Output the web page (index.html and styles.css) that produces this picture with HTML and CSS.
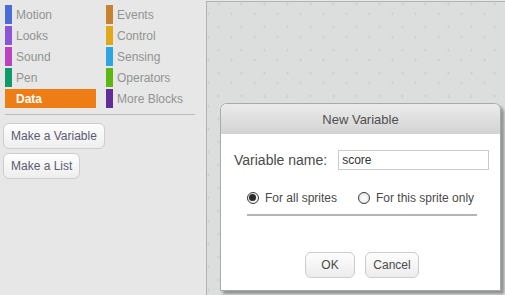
FILE: index.html
```html
<!DOCTYPE html>
<html lang="en">
<head>
  <meta charset="UTF-8">
  <title>New Variable</title>
  <link rel="stylesheet" href="styles.css">
</head>
<body>
  <div class="app">
    <div class="palette">
      <div class="categories">
        <div class="cat"><span class="swatch motion"></span>Motion</div>
        <div class="cat"><span class="swatch events"></span>Events</div>
        <div class="cat"><span class="swatch looks"></span>Looks</div>
        <div class="cat"><span class="swatch control"></span>Control</div>
        <div class="cat"><span class="swatch sound"></span>Sound</div>
        <div class="cat"><span class="swatch sensing"></span>Sensing</div>
        <div class="cat"><span class="swatch pen"></span>Pen</div>
        <div class="cat"><span class="swatch operators"></span>Operators</div>
        <div class="cat selected">Data</div>
        <div class="cat"><span class="swatch more"></span>More Blocks</div>
      </div>
      <div class="rule"></div>
      <div class="palette-buttons">
        <button class="palette-btn">Make a Variable</button>
        <button class="palette-btn">Make a List</button>
      </div>
    </div>

    <div class="scripts">
      <!-- faint plus marks of the script area -->
      <svg class="grid" width="100%" height="100%">
        <defs>
          <pattern id="plus" width="23" height="23" patternUnits="userSpaceOnUse" x="0" y="0">
            <path d="M10 2h3M11.5 0.5v3M0 12h3M1.5 10.5v3" stroke="#cfd0d0" stroke-width="1" fill="none"/>
          </pattern>
        </defs>
        <rect width="100%" height="100%" fill="url(#plus)"/>
      </svg>
    </div>

    <div class="dialog">
      <div class="dialog-title">New Variable</div>
      <div class="dialog-body">
        <div class="name-row">
          <label class="name-label" for="var-name">Variable name:</label>
          <input class="name-input" id="var-name" type="text" value="score">
        </div>
        <div class="scope">
          <div class="scope-row">
            <span class="radio checked"></span><span class="scope-text">For all sprites</span>
            <span class="radio"></span><span class="scope-text">For this sprite only</span>
          </div>
          <div class="scope-line"></div>
        </div>
        <div class="dialog-buttons">
          <button class="dlg-btn ok">OK</button>
          <button class="dlg-btn cancel">Cancel</button>
        </div>
      </div>
    </div>
  </div>
</body>
</html>
```

FILE: styles.css
```css
body {
  margin: 0;
  font-family: 'Liberation Sans', Arial, sans-serif;
  background-color: #e6e7e6;
  overflow: hidden;
}

.app {
  position: relative;
  display: flex;
  width: 505px;
  height: 295px;
}

.palette {
  width: 206px;
  flex-shrink: 0;
  padding: 5px 0 0 5px;
  box-sizing: border-box;
}

.categories {
  display: grid;
  grid-template-columns: 91px 91px;
  grid-auto-rows: 19px;
  column-gap: 10px;
  row-gap: 2px;
}

.cat {
  display: flex;
  align-items: center;
  font-size: 12px;
  color: #939393;
}

.swatch {
  width: 7px;
  height: 19px;
  margin-right: 4px;
}

.motion { background-color: #4a6cd4; }
.looks { background-color: #8a55d7; }
.sound { background-color: #bb42c3; }
.pen { background-color: #0e9a6c; }
.events { background-color: #c88330; }
.control { background-color: #e1a91a; }
.sensing { background-color: #2ca5e2; }
.operators { background-color: #5cb712; }
.more { background-color: #632d99; }

.cat.selected {
  background-color: #ee7d16;
  color: #fff;
  font-weight: bold;
  padding-left: 11px;
}

.rule {
  width: 190px;
  height: 1px;
  margin-top: 6px;
  background-color: #bdbdbd;
}

.palette-buttons {
  display: flex;
  flex-direction: column;
  align-items: flex-start;
  gap: 4px;
  margin-top: 8px;
  margin-left: -2px;
}

.palette-btn {
  height: 26px;
  padding: 0 7px;
  font-family: inherit;
  font-size: 12px;
  color: #5a5a72;
  background: linear-gradient(#fefefe, #eeeeee);
  border: 1px solid #cdcdcd;
  border-radius: 6px;
}

.scripts {
  position: relative;
  flex: 1;
  margin-top: 1px;
  background-color: #dcdddd;
  border-top: 1px solid #b3b3b3;
  border-left: 1px solid #b3b3b3;
  overflow: hidden;
}

.grid {
  position: absolute;
  inset: 0;
}

/* modal dialog over the script area */
.dialog {
  position: absolute;
  left: 220px;
  top: 103px;
  width: 281px;
  height: 188px;
  box-sizing: border-box;
  background-color: #fff;
  border: 1px solid #a9a9a9;
  border-radius: 7px 7px 0 0;
  box-shadow: 3px 3px 3px rgba(0, 0, 0, 0.35);
  display: flex;
  flex-direction: column;
}

.dialog-title {
  height: 30px;
  display: flex;
  align-items: center;
  justify-content: center;
  font-size: 13px;
  color: #505050;
  background: linear-gradient(#ebebeb, #d3d3d3);
  border-radius: 6px 6px 0 0;
}

.dialog-body {
  flex: 1;
  display: flex;
  flex-direction: column;
  padding-top: 16px;
}

.name-row {
  display: flex;
  align-items: center;
  height: 20px;
  padding-left: 13px;
}

.name-label {
  font-size: 14px;
  color: #4a4a4a;
  margin-right: 11px;
}

.name-input {
  width: 151px;
  height: 20px;
  box-sizing: border-box;
  padding: 0 3px;
  font-family: inherit;
  font-size: 12px;
  color: #333;
  border: 1px solid #cbcbcb;
  outline: none;
}

.scope {
  display: flex;
  flex-direction: column;
  align-items: flex-start;
  margin-top: 22px;
  padding-left: 26px;
}

.scope-row {
  display: flex;
  align-items: center;
  height: 12px;
  font-size: 12px;
  color: #4a4a4a;
}

.radio {
  width: 12px;
  height: 12px;
  box-sizing: border-box;
  border: 1.5px solid #3a3a3a;
  border-radius: 50%;
  background: radial-gradient(#ffffff, #e4e4e4);
  margin-right: 6px;
  position: relative;
}

.radio.checked::after {
  content: '';
  position: absolute;
  left: 1px;
  top: 1px;
  width: 7px;
  height: 7px;
  border-radius: 50%;
  background-color: #2a2a2a;
}

.scope-text + .radio {
  margin-left: 21px;
}

.scope-line {
  width: 230px;
  height: 2px;
  margin-top: 10px;
  background-color: #b4b4b4;
}

.dialog-buttons {
  display: flex;
  gap: 10px;
  margin-top: 36px;
  padding-left: 84px;
}

.dlg-btn {
  height: 26px;
  padding: 0;
  font-family: inherit;
  font-size: 12px;
  color: #4a4a4a;
  background: linear-gradient(#fefefe, #ececec);
  border: 1px solid #cdcdcd;
  border-radius: 6px;
}

.dlg-btn.ok {
  width: 50px;
}

.dlg-btn.cancel {
  width: 54px;
}
```
